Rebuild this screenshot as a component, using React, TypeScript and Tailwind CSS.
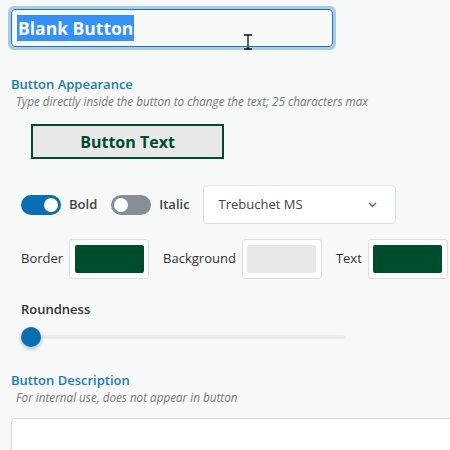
import React from "react";

const font = { fontFamily: '"Open Sans", "Noto Sans", sans-serif' };

function Toggle({ on }: { on: boolean }) {
  return (
    <span
      className={`flex h-5 w-10 items-center rounded-full px-[3px] ${
        on ? "justify-end bg-[#0a6eb4]" : "justify-start bg-[#868e96]"
      }`}
    >
      <span className="h-[14px] w-[14px] rounded-full bg-white" />
    </span>
  );
}

function Swatch({ label, color }: { label: string; color: string }) {
  return (
    <div className="flex items-center gap-[6px]">
      <span className="text-[13px] text-[#333]">{label}</span>
      <span className="flex h-10 w-20 items-center justify-center rounded-[3px] border border-[#dcdfe2] bg-white">
        <span className="h-7 w-[69px] rounded-[2px]" style={{ backgroundColor: color }} />
      </span>
    </div>
  );
}

export default function App() {
  return (
    <div className="h-[450px] w-[450px] overflow-hidden bg-[#f7f8f8]" style={font}>
      <div className="pl-[8px] pt-[6px]">
        <div className="relative w-[328px] rounded-[6px] border-[3px] border-[#a8cce6]">
          <div className="flex h-[38px] items-center rounded-[4px] border border-[#1a73c0] bg-[#f7f8f8] px-[5px]">
            <span className="bg-[#3390ff] px-[1px] text-[17.5px] font-bold leading-[26px] text-white">
              Blank Button
            </span>
          </div>
          <svg className="absolute left-[232px] top-[25px]" width="10" height="16" viewBox="0 0 10 16">
            <path d="M1 1h8M5 1v14M1 15h8" stroke="#111" strokeWidth="1.3" fill="none" />
          </svg>
        </div>
      </div>

      <div className="mt-[25px] pl-[11px]">
        <h2 className="text-[13px] font-semibold leading-[18px] text-[#1a7ac0]">Button Appearance</h2>
        <p className="pl-[5px] text-[11.7px] italic leading-[16px] text-[#777]">
          Type directly inside the button to change the text; 25 characters max
        </p>
      </div>

      <div className="ml-[31px] mt-[15px] flex h-[35px] w-[193px] items-center justify-center border-2 border-[#004d2e] bg-[#e8e8e8]">
        <span className="text-[16px] font-bold text-[#004d2e]">Button Text</span>
      </div>

      <div className="ml-[21px] mt-[26px] flex items-center">
        <Toggle on />
        <span className="ml-2 text-[13px] font-semibold text-[#444]">Bold</span>
        <span className="ml-[14px]">
          <Toggle on={false} />
        </span>
        <span className="ml-2 text-[13px] font-semibold text-[#444]">Italic</span>
        <div className="ml-[13px] flex h-[39px] w-[193px] items-center justify-between rounded-[4px] border border-[#dcdfe2] bg-white pl-[15px] pr-[18px]">
          <span className="text-[13px] text-[#444]">Trebuchet MS</span>
          <svg width="9" height="6" viewBox="0 0 9 6">
            <path d="M1 1l3.5 3.5L8 1" stroke="#666" strokeWidth="1.4" fill="none" />
          </svg>
        </div>
      </div>

      <div className="ml-[21px] mt-[15px] flex items-center gap-[14px]">
        <Swatch label="Border" color="#004d2e" />
        <Swatch label="Background" color="#e8e8e8" />
        <Swatch label="Text" color="#004d2e" />
      </div>

      <div className="ml-[21px] mt-[21px]">
        <p className="text-[13px] font-semibold leading-[18px] text-[#333]">Roundness</p>
        <div className="relative mt-[9px] h-5 w-[324px]">
          <div className="absolute left-[10px] right-0 top-[8px] h-[4px] rounded-full bg-[#e9ecef]" />
          <div className="absolute left-0 top-0 h-5 w-5 rounded-full bg-[#0a6eb4] shadow-[0_2px_4px_rgba(0,0,0,0.25)]" />
        </div>
      </div>

      <div className="mt-[24px] pl-[11px]">
        <h2 className="text-[13px] font-semibold leading-[18px] text-[#1a7ac0]">Button Description</h2>
        <p className="pl-[5px] text-[11.7px] italic leading-[16px] text-[#777]">
          For internal use, does not appear in button
        </p>
        <div className="mt-[13px] h-[60px] w-[460px] rounded-[4px] border border-[#d6d9dc] bg-white" />
      </div>
    </div>
  );
}
